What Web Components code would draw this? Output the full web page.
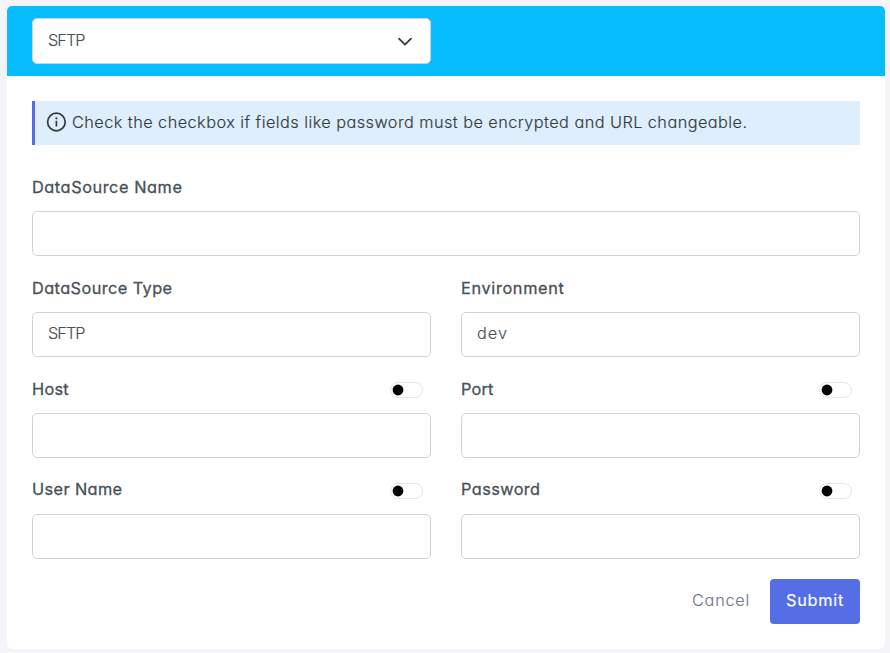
<!DOCTYPE html>
<html lang="en">
<head>
<meta charset="utf-8">
<title>Data source</title>
<style>
  html, body { height: 100%; }
  body {
    margin: 0; padding: 6px 5px 4px 7px; box-sizing: border-box; overflow: hidden;
    background: #f4f4f9; color: #495057;
    font: 350 16.3px/24px Inter, "Open Sans", sans-serif;
    font-feature-settings: "cv11";
    -webkit-text-stroke: 0.15px currentColor;
  }
</style>
</head>
<body>
<source-card>
  <select-box slot="header"><fit-text width="36.5">SFTP</fit-text></select-box>
  <info-note><fit-text width="675.5">Check the checkbox if fields like password must be encrypted and URL changeable.</fit-text></info-note>
  <form-grid>
    <form-field wide label="DataSource Name" label-width="150.5"></form-field>
    <form-field label="DataSource Type" label-width="140.5"><fit-text width="36.5">SFTP</fit-text></form-field>
    <form-field label="Environment" label-width="103.5"><fit-text width="31">dev</fit-text></form-field>
    <form-field label="Host" label-width="37"><toggle-switch slot="toggle"></toggle-switch></form-field>
    <form-field label="Port" label-width="32.5"><toggle-switch slot="toggle"></toggle-switch></form-field>
    <form-field raised label="User Name" label-width="90.5"><toggle-switch slot="toggle"></toggle-switch></form-field>
    <form-field raised label="Password" label-width="79.5"><toggle-switch slot="toggle"></toggle-switch></form-field>
  </form-grid>
  <action-bar>
    <action-button><fit-text width="58">Cancel</fit-text></action-button>
    <action-button primary><fit-text width="58">Submit</fit-text></action-button>
  </action-bar>
</source-card>

<script>
const define = (name, html, setup) => customElements.define(name, class extends HTMLElement {
  constructor() {
    super();
    this.attachShadow({ mode: 'open' }).innerHTML = html;
  }
  connectedCallback() { if (setup) setup(this, this.shadowRoot); }
});

define('source-card', `
  <style>
    :host { display: flex; flex-direction: column; height: 100%; box-sizing: border-box;
      background: #fff; border-radius: 5px; overflow: hidden; }
    header { height: 70px; box-sizing: border-box; padding: 12px 25px; background: #08bdff; }
    main { padding: 25px; }
  </style>
  <header><slot name="header"></slot></header>
  <main><slot></slot></main>`);

define('select-box', `
  <style>
    :host { display: flex; align-items: center; justify-content: space-between;
      width: 399px; height: 46px; box-sizing: border-box; padding: 0 17px 2px 15px;
      background: #fff; border: 1px solid #ced4da; border-radius: 5px; }
    svg { display: block; margin-top: 3px; }
  </style>
  <slot></slot>
  <svg width="16" height="16" viewBox="0 0 16 16" fill="none" stroke="#343a40" stroke-width="1.8" stroke-linecap="round" stroke-linejoin="round"><path d="M2 4.7l6 6 6-6"/></svg>`);

define('info-note', `
  <style>
    :host { display: flex; align-items: center; gap: 6px; height: 44px; box-sizing: border-box;
      padding: 0 11px 2px; border-left: 3px solid #556ee6; background: #deeefc; color: #343a40; }
    svg { display: block; flex: none; overflow: visible; }
  </style>
  <svg width="20" height="20" viewBox="0 0 20 20">
    <circle cx="10.4" cy="10" r="8.8" fill="none" stroke="#343a40" stroke-width="1.7"/>
    <path d="M10.4 8.8v5.6" stroke="#343a40" stroke-width="1.7"/>
    <circle cx="10.4" cy="6.3" r="1.1" fill="#343a40"/>
  </svg>
  <slot></slot>`);

define('form-grid', `
  <style>
    :host { display: grid; grid-template-columns: 1fr 1fr; gap: 20px 30px; margin-top: 30px; }
  </style>
  <slot></slot>`);

define('form-field', `
  <style>
    :host { display: block; height: 81px; }
    :host([wide]) { grid-column: 1 / -1; }
    .top { display: flex; justify-content: space-between; height: 36px; padding-right: 8px; }
    .label { font-weight: 400; -webkit-text-stroke: 0.3px currentColor; }
    :host([raised]) .label { margin-top: -1px; }
    .box { display: flex; align-items: center; height: 45px; box-sizing: border-box;
      padding: 0 15px 3px; border: 1px solid #ced4da; border-radius: 5px; background: #fff; }
  </style>
  <div class="top"><fit-text class="label"></fit-text><slot name="toggle"></slot></div>
  <div class="box"><slot></slot></div>`,
  (host, root) => {
    const label = root.querySelector('.label');
    label.setAttribute('width', host.getAttribute('label-width'));
    label.textContent = host.getAttribute('label');
  });

define('toggle-switch', `
  <style>
    :host { display: block; width: 33px; height: 16px; margin-top: 5px;
      box-sizing: border-box; border: 1px solid #e6e6e8; border-radius: 8px; }
    svg { display: block; }
  </style>
  <svg width="31" height="14"><circle cx="7" cy="7" r="5.4" fill="#000"/></svg>`);

define('action-bar', `
  <style>:host { display: flex; justify-content: flex-end; gap: 4px; margin-top: 20px; }</style>
  <slot></slot>`);

define('action-button', `
  <style>
    :host { display: flex; align-items: center; justify-content: center; width: 90px; height: 45px;
      box-sizing: border-box; padding-bottom: 3px; border-radius: 4px; color: #74788d; }
    :host([primary]) { background: #556ee6; color: #fff; font-weight: 400; }
  </style>
  <slot></slot>`);

// Spaces its letters so that the text fills the width it is given.
define('fit-text', `
  <style>:host { display: block; white-space: nowrap; } span { display: inline-block; }</style>
  <span><slot></slot></span>`,
  (host, root) => queueMicrotask(() => {
    const target = parseFloat(host.getAttribute('width'));
    const natural = root.querySelector('span').getBoundingClientRect().width;
    const count = host.textContent.length;
    if (!target || !count || !natural) return;
    host.style.letterSpacing = (target - natural) / count + 'px';
    host.style.width = target + 'px';
  }));
</script>
</body>
</html>
